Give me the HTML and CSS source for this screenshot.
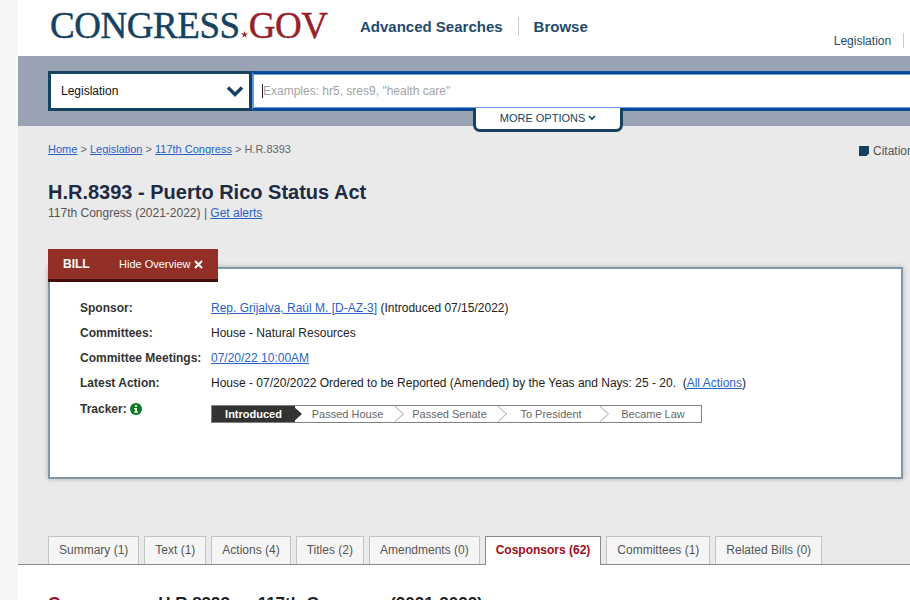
FILE: index.html
```html
<!DOCTYPE html>
<html lang="en">
<head>
<meta charset="utf-8">
<title>H.R.8393 - Puerto Rico Status Act</title>
<link rel="stylesheet" href="styles.css">
</head>
<body>
<div class="page">
  <div class="strip"></div>
  <div class="main">
    <header class="top">
      <div class="logo"><span class="logo-a">CONGRESS</span><svg class="logo-star" viewBox="0 0 10 10" width="7" height="7"><polygon points="5,0 6.2,3.6 10,3.6 6.9,5.9 8.1,9.6 5,7.3 1.9,9.6 3.1,5.9 0,3.6 3.8,3.6" fill="#a3262c"/></svg><span class="logo-b">GOV</span></div>
      <nav class="nav"><a class="nav-item">Advanced Searches</a><span class="nav-sep"></span><a class="nav-item">Browse</a></nav>
      <div class="subnav"><span>Legislation</span><span class="sub-sep"></span></div>
    </header>
    <section class="search">
      <div class="select"><span>Legislation</span>
        <svg width="18" height="12" viewBox="0 0 18 12"><path d="M2 2.5l7 7 7-7" fill="none" stroke="#15425f" stroke-width="3.4"/></svg>
      </div>
      <div class="input"><span class="caret"></span><span class="placeholder">Examples: hr5, sres9, "health care"</span></div>
      <div class="more">MORE OPTIONS <svg width="8" height="6" viewBox="0 0 8 6"><path d="M1 1l3 3 3-3" fill="none" stroke="#15425f" stroke-width="1.6"/></svg></div>
    </section>
    <section class="content">
      <div class="crumbrow">
        <div class="crumbs"><a href="#">Home</a> &gt; <a href="#">Legislation</a> &gt; <a href="#">117th Congress</a> &gt; H.R.8393</div>
        <div class="cite"><svg width="10" height="10" viewBox="0 0 10 10"><path d="M0 0h10v7.5L7.5 10H0z" fill="#15425f"/></svg><span>Citation</span></div>
      </div>
      <h1 class="title">H.R.8393 - Puerto Rico Status Act</h1>
      <div class="sub">117th Congress (2021-2022) | <a href="#">Get alerts</a></div>
      <div class="flag"><b>BILL</b><span class="hide">Hide Overview <svg width="9" height="9" viewBox="0 0 9 9"><path d="M1 1l7 7M8 1L1 8" stroke="#fff" stroke-width="2"/></svg></span></div>
      <div class="overview">
        <div class="row"><span class="label">Sponsor:</span><span><a href="#">Rep. Grijalva, Raúl M. [D-AZ-3]</a> (Introduced 07/15/2022)</span></div>
        <div class="row"><span class="label">Committees:</span><span>House - Natural Resources</span></div>
        <div class="row"><span class="label">Committee Meetings:</span><span><a href="#">07/20/22 10:00AM</a></span></div>
        <div class="row"><span class="label">Latest Action:</span><span>House - 07/20/2022 Ordered to be Reported (Amended) by the Yeas and Nays: 25 - 20.&nbsp; (<a href="#">All Actions</a>)</span></div>
        <div class="row tracker-row"><span class="label tracker-label">Tracker: <svg width="12" height="12" viewBox="0 0 12 12"><circle cx="6" cy="6" r="6" fill="#0a7a1e"/><rect x="5" y="2.2" width="2" height="1.8" fill="#fff"/><path d="M4.2 5h2.8v3.6h1v1.2H4.2V8.6h1V6.2h-1z" fill="#fff"/></svg></span>
          <ol class="tracker">
            <li class="step current">Introduced</li>
            <li class="step s2">Passed House</li>
            <li class="step s3">Passed Senate</li>
            <li class="step s4">To President</li>
            <li class="step s5">Became Law</li>
          </ol>
        </div>
      </div>
      <div class="tabs">
        <a class="tab">Summary (1)</a>
        <a class="tab">Text (1)</a>
        <a class="tab">Actions (4)</a>
        <a class="tab">Titles (2)</a>
        <a class="tab">Amendments (0)</a>
        <a class="tab active">Cosponsors (62)</a>
        <a class="tab">Committees (1)</a>
        <a class="tab">Related Bills (0)</a>
      </div>
    </section>
    <section class="below">
      <h2 class="cos"><span class="cos-red">C</span>osponsors: H.R.8393 — 117th Congress (2021-2022)</h2>
    </section>
  </div>
</div>
</body>
</html>
```
FILE: styles.css
```css
* { box-sizing: border-box; }
html, body { margin: 0; height: 100%; overflow: hidden; }
body { font-family: "Liberation Sans", Arial, sans-serif; font-size: 12px; color: #333; background: #fff; }
a { color: #2b62c9; }
.page { display: flex; width: 910px; height: 600px; overflow: hidden; }
.strip { width: 18px; flex: none; background: #f6f6f6; }
.main { flex: 1; min-width: 0; display: flex; flex-direction: column; overflow: hidden; }

.top { height: 56px; flex: none; display: flex; background: #fff; padding-left: 32px; white-space: nowrap; }
.logo { width: 277px; flex: none; height: 56px; padding-top: 4px; font-family: "Liberation Serif", serif; font-size: 37px; line-height: 44px; letter-spacing: -0.45px; -webkit-text-stroke: 0.45px; display: flex; align-items: baseline; }
.logo-a { color: #15425f; }
.logo-b { color: #96212a; }
.logo-star { margin: 0 1px; flex: none; }
.nav { margin-left: 33px; height: 20px; margin-top: 16px; display: flex; align-items: center; flex: none; }
.nav-item { font-size: 15px; font-weight: 700; color: #1f4a6b; }
.nav-sep { width: 1px; height: 19px; background: #ccc; margin: 0 15px; }
.subnav { margin-left: 246px; margin-top: 33px; height: 15px; display: flex; align-items: center; color: #1f4a6b; flex: none; }
.sub-sep { width: 1px; height: 15px; background: #ccc; margin-left: 12px; }

.search { position: relative; height: 70px; flex: none; background: #9aa3b3; padding: 15px 0 0 30px; display: flex; }
.select { width: 204px; height: 40px; flex: none; border: 3px solid #15425f; background: #fff; display: flex; align-items: center; justify-content: space-between; padding: 0 5px 0 10px; color: #111; }
.input { flex: 1; height: 40px; background: #fff; border-top: 3px solid #0d4a96; border-bottom: 3px solid #0d4a96; border-left: 1px solid #5b92e5; box-shadow: inset 0 1px 0 #6b9ee8, inset 0 -1px 0 #6b9ee8, inset 1px 0 0 #6b9ee8; display: flex; align-items: center; padding-left: 9px; overflow: hidden; white-space: nowrap; }
.caret { width: 1px; height: 14px; background: #222; flex: none; }
.placeholder { color: #a3a3a3; }
.more { position: absolute; left: 455px; top: 52px; width: 150px; height: 24px; padding-bottom: 2px; background: #fff; border: 3px solid #15425f; border-top: 0; border-radius: 0 0 7px 7px; color: #15425f; font-size: 11px; display: flex; align-items: center; justify-content: center; gap: 3px; }

.content { height: 439px; flex: none; background: #eaeaea; border-bottom: 1px solid #8a8a8a; padding: 16px 0 0 30px; display: flex; flex-direction: column; }
.content > * { flex: none; }
.crumbrow { display: flex; justify-content: space-between; height: 14px; line-height: 14px; font-size: 11px; color: #666; white-space: nowrap; }
.cite { display: flex; align-items: center; gap: 4px; margin-top: 2px; height: 14px; font-size: 12px; width: 51px; overflow: hidden; flex: none; color: #555; }
.cite svg { flex: none; }
.title { margin: 24px 0 0; font-size: 20px; line-height: 24px; font-weight: 700; color: #1f2a44; }
.sub { margin-top: 2px; font-size: 12px; line-height: 14px; color: #555; }
.flag { position: relative; z-index: 1; margin-top: 29px; width: 170px; height: 33px; background: #922f27; border-bottom: 3px solid #420d0b; color: #fff; display: flex; align-items: center; padding: 0 0 0 15px; }
.flag b { font-size: 12px; width: 56px; }
.hide { font-size: 11px; display: flex; align-items: center; gap: 3px; }
.overview { margin-top: -15px; width: 855px; height: 212px; background: #fff; border: 2px solid #7f97a6; box-shadow: 0 0 5px rgba(0,0,0,.25); padding: 27px 0 0 30px; color: #222; }
.row { display: flex; height: 25px; line-height: 25px; white-space: nowrap; }
.label { width: 131px; flex: none; font-weight: 700; color: #333; }
.tracker-row { margin-top: 1px; }
.tracker-label svg { vertical-align: -2px; }
.tracker { list-style: none; margin: 8px 0 0; padding: 0; display: flex; width: 491px; height: 18px; border: 1px solid #808080; overflow: hidden; font-size: 11px; line-height: 16px; color: #666; }
.step { position: relative; text-align: center; flex: none; }
.step::before, .step::after { content: ""; position: absolute; z-index: 1; top: 0; width: 9px; height: 16px; clip-path: polygon(0 0, 100% 50%, 0 100%); }
.step::before { right: -7px; background: #999; }
.step::after { right: -6px; background: #fff; }
.s5::before, .s5::after { display: none; }
.current { width: 83px; background: #333; color: #fff; font-weight: 700; }
.current::before, .current::after { background: #333; }
.s2 { width: 102px; padding-left: 3px; }
.s3 { width: 103px; padding-left: 2px; }
.s4 { width: 102px; }
.s5 { width: 99px; padding-left: 3px; }

.tabs { display: flex; align-items: flex-start; gap: 5px; margin-top: 57px; }
.tab { height: 28px; line-height: 27px; padding: 0 10px; background: #f5f5f5; border: 1px solid #c4c4c4; border-bottom: 0; color: #555; white-space: nowrap; }
.tab.active { height: 29px; background: #fff; border: 1px solid #8a8a8a; border-bottom: 0; color: #a00d18; font-weight: 700; }

.below { flex: 1; background: #fff; padding: 28px 0 0 30px; }
.cos { margin: 0; font-size: 17px; line-height: 22px; font-weight: 700; color: #222; white-space: nowrap; word-spacing: 0.6px; }
.cos-red { color: #a00d18; }
```
